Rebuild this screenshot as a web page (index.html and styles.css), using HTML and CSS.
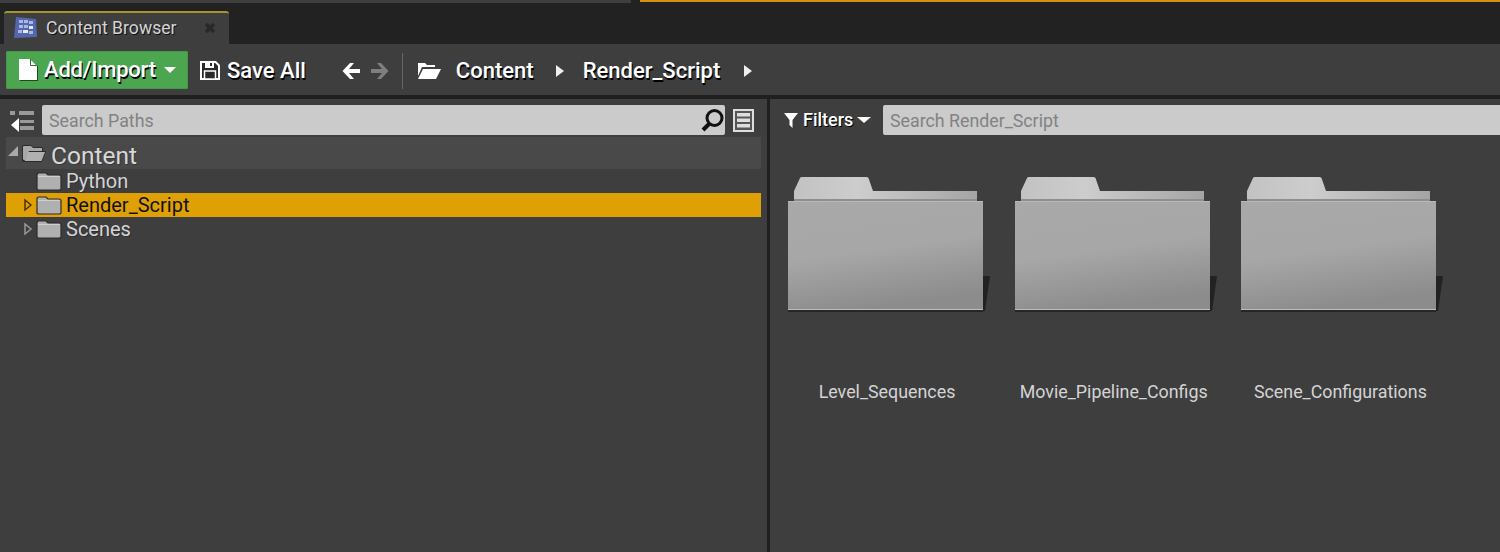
FILE: index.html
```html
<!DOCTYPE html>
<html lang="en">
<head>
  <meta charset="UTF-8">
  <title>Content Browser</title>
  <link rel="stylesheet" href="styles.css">
</head>
<body>
  <div class="top-strip">
    <div class="strip-left"></div>
    <div class="strip-right"></div>
  </div>

  <div class="tab-bar">
    <div class="tab">
      <svg class="tab-icon" width="25" height="23" viewBox="0 0 25 23">
        <path d="M3 1 L23 3 L24 21 L1 22 Z" fill="#5467ad"/>
        <g fill="#a9b6e6">
          <rect x="6" y="4" width="4" height="3"/><rect x="11" y="4" width="4" height="3"/><rect x="16" y="5" width="4" height="3"/>
          <rect x="6" y="9" width="4" height="3"/><rect x="11" y="9" width="4" height="3"/><rect x="16" y="10" width="4" height="3" fill="#e6e9f5"/>
          <rect x="5" y="14" width="4" height="3"/><rect x="10" y="14" width="5" height="3" fill="#e6e9f5"/><rect x="16" y="15" width="4" height="3"/>
        </g>
      </svg>
      <span class="tab-label">Content Browser</span>
      <svg class="tab-close" width="10" height="10" viewBox="0 0 10 10">
        <path d="M1 1 L9 9 M9 1 L1 9" stroke="#282828" stroke-width="3.500"/>
      </svg>
    </div>
  </div>

  <div class="toolbar">
    <button class="add-btn">
      <svg class="doc-icon" width="20" height="23" viewBox="0 0 20 23">
        <path d="M1 1 H12 L19 8 V22 H1 Z" fill="#fff"/>
        <path d="M12.500 1 V7.500 H19" fill="none" stroke="#2e6b30" stroke-width="1"/>
      </svg>
      <span>Add/Import</span>
      <i class="caret"></i>
    </button>
    <div class="tool-item save">
      <svg width="20" height="19" viewBox="0 0 20 19">
        <path d="M1 1 H15.500 L19 4.500 V18 H1 Z" fill="#2a2a2a" stroke="#fff" stroke-width="2"/>
        <rect x="5" y="1" width="9" height="6" fill="#fff"/>
        <rect x="10" y="2" width="2" height="3" fill="#2a2a2a"/>
        <rect x="4.500" y="10" width="11" height="8" fill="#2a2a2a" stroke="#fff" stroke-width="1.500"/>
      </svg>
      <span>Save All</span>
    </div>
    <div class="arrows">
      <svg width="20" height="20" viewBox="0 0 20 20">
        <path d="M9 2 L1.500 10 L9 18 H13 L8 12 H19 V8 H8 L13 2 Z" fill="#fff"/>
      </svg>
      <svg width="20" height="20" viewBox="0 0 20 20">
        <path d="M11 2 L18.500 10 L11 18 H7 L12 12 H1 V8 H12 L7 2 Z" fill="#7f7f7f"/>
      </svg>
    </div>
    <div class="sep"></div>
    <svg class="crumb-folder" width="24" height="18" viewBox="0 0 24 18">
      <path d="M1 1 H8 L10 3 H18 V5 H5 L1 14 Z" fill="#fff"/>
      <path d="M6 7 H24 L19 17 H1 Z" fill="#fff"/>
    </svg>
    <span class="crumb first">Content</span>
    <i class="crumb-arrow"></i>
    <span class="crumb">Render_Script</span>
    <i class="crumb-arrow last"></i>
  </div>
  <div class="toolbar-line"></div>

  <div class="main">
    <div class="paths">
      <div class="paths-search">
        <svg class="collapse-icon" width="26" height="24" viewBox="0 0 26 24">
          <g fill="#9a9a9a">
            <rect x="1" y="1" width="5" height="4"/><rect x="10" y="1" width="15" height="4"/>
            <rect x="11" y="10" width="14" height="3"/><rect x="11" y="16" width="14" height="4"/>
          </g>
          <path d="M10 8 V22 L2 15 Z" fill="#fff"/>
        </svg>
        <div class="search-box">
          <span>Search Paths</span>
          <svg class="glass" width="25" height="25" viewBox="0 0 25 25">
            <circle cx="14.500" cy="10" r="7.500" fill="none" stroke="#111" stroke-width="3"/>
            <path d="M9 16 L3 22" stroke="#111" stroke-width="4"/>
          </svg>
        </div>
        <svg class="view-icon" width="21" height="23" viewBox="0 0 21 23">
          <rect x="1" y="1" width="19" height="21" fill="#555" stroke="#ddd" stroke-width="2"/>
          <rect x="4" y="4" width="13" height="3.500" fill="#ddd"/>
          <rect x="4" y="9.500" width="13" height="3.500" fill="#ddd"/>
          <rect x="4" y="15" width="13" height="3.500" fill="#ddd"/>
        </svg>
      </div>

      <div class="tree">
        <div class="tree-root">
          <i class="open-arrow"></i>
          <svg width="26" height="20" viewBox="0 0 26 20">
            <path d="M1 4 Q1 2 3 2 H10 L12 4 H21 Q22 4 22 6 V8 H25 L21 19 H3 Q1 19 1 17 Z" fill="#2a2a2a"/>
            <path d="M2 4 Q2 3 3 3 H10 L12 5 H21 V8 H8 L4 17 H3 Q2 17 2 16 Z" fill="#a8a8a8"/>
            <path d="M7 9 H24 L20.500 18 H3.500 Z" fill="#b0b0b0"/>
          </svg>
          <span>Content</span>
        </div>
        <div class="tree-row">
          <span class="tree-arrow none"></span>
          <svg class="small-folder" width="26" height="20" viewBox="0 0 26 20">
            <path d="M1 4 Q1 2 3 2 H10 L12 4 H23 Q25 4 25 6 V18 Q25 19 23 19 H3 Q1 19 1 18 Z" fill="#b0b0b0" stroke="#2c2c2c" stroke-width="1.200"/>
            <rect x="2" y="5" width="22" height="1" fill="#cfcfcf"/>
          </svg>
          <span>Python</span>
        </div>
        <div class="tree-row selected">
          <svg class="tree-arrow" width="10" height="14" viewBox="0 0 10 14">
            <path d="M2 2 L8 7 L2 12 Z" fill="none" stroke="#4a3500" stroke-width="1.500"/>
          </svg>
          <svg class="small-folder" width="26" height="20" viewBox="0 0 26 20">
            <path d="M1 4 Q1 2 3 2 H10 L12 4 H23 Q25 4 25 6 V18 Q25 19 23 19 H3 Q1 19 1 18 Z" fill="#b0b0b0" stroke="#2c2c2c" stroke-width="1.200"/>
            <rect x="2" y="5" width="22" height="1" fill="#cfcfcf"/>
          </svg>
          <span>Render_Script</span>
        </div>
        <div class="tree-row">
          <svg class="tree-arrow" width="10" height="14" viewBox="0 0 10 14">
            <path d="M2 2 L8 7 L2 12 Z" fill="none" stroke="#999" stroke-width="1.500"/>
          </svg>
          <svg class="small-folder" width="26" height="20" viewBox="0 0 26 20">
            <path d="M1 4 Q1 2 3 2 H10 L12 4 H23 Q25 4 25 6 V18 Q25 19 23 19 H3 Q1 19 1 18 Z" fill="#b0b0b0" stroke="#2c2c2c" stroke-width="1.200"/>
            <rect x="2" y="5" width="22" height="1" fill="#cfcfcf"/>
          </svg>
          <span>Scenes</span>
        </div>
      </div>
    </div>

    <div class="splitter"></div>

    <div class="assets">
      <div class="assets-search">
        <div class="filters">
          <svg width="14" height="15" viewBox="0 0 14 15">
            <path d="M0 0 H14 L8.500 7 V15 L5.500 12 V7 Z" fill="#fff"/>
          </svg>
          <span>Filters</span>
          <i class="caret small"></i>
        </div>
        <div class="search-box wide"><span>Search Render_Script</span></div>
      </div>

      <div class="grid">
        <div class="asset">
          <svg width="204" height="146" viewBox="0 0 204 146">
            <defs>
              <linearGradient id="front" x1="0.100" y1="0" x2="0.350" y2="1">
                <stop offset="0" stop-color="#a9a9a9"/>
                <stop offset="0.500" stop-color="#a7a7a7"/>
                <stop offset="1" stop-color="#8c8c8c"/>
              </linearGradient>
              <linearGradient id="back" x1="0" y1="0" x2="1" y2="0">
                <stop offset="0" stop-color="#c2c2c2"/>
                <stop offset="0.350" stop-color="#cdcdcd"/>
                <stop offset="1" stop-color="#a4a4a4"/>
              </linearGradient>
              <g id="folder">
                <path d="M196 110 H203 L198 145 H196 Z" fill="#222"/>
                <path d="M7 25 L13 12 Q13.500 11 15 11 H79 Q81 11 81.500 12 L86 25 H190 V36 H7 Z" fill="url(#back)"/>
                <rect x="7" y="33" width="183" height="2" fill="#8e8e8e"/>
                <rect x="1" y="35" width="195" height="111" fill="#262626"/>
                <rect x="1" y="35" width="195" height="109" fill="url(#front)"/>
                <rect x="1" y="35" width="195" height="1" fill="#b8b8b8"/>
                <rect x="1" y="143" width="195" height="1" fill="#bdbdbd"/>
              </g>
            </defs>
            <use href="#folder"/>
          </svg>
          <span class="asset-name">Level_Sequences</span>
        </div>
        <div class="asset">
          <svg width="204" height="146" viewBox="0 0 204 146"><use href="#folder"/></svg>
          <span class="asset-name">Movie_Pipeline_Configs</span>
        </div>
        <div class="asset">
          <svg width="204" height="146" viewBox="0 0 204 146"><use href="#folder"/></svg>
          <span class="asset-name">Scene_Configurations</span>
        </div>
      </div>
    </div>
  </div>
</body>
</html>
```

FILE: styles.css
```css
html, body {
  margin: 0;
  height: 552px;
  overflow: hidden;
}
body {
  font-family: Roboto, 'Liberation Sans', sans-serif;
  background: #3e3e3e;
  color: #d4d4d4;
  display: flex;
  flex-direction: column;
}
svg {
  display: block;
  flex: none;
}

/* top strip */
.top-strip {
  height: 3px;
  background: #222;
  display: flex;
}
.strip-left {
  width: 631px;
  background: #3e3e3e;
}
.strip-right {
  width: 860px;
  height: 2px;
  margin-left: 9px;
  background: #d8920f;
}

/* tab */
.tab-bar {
  height: 41px;
  background: #222;
  display: flex;
  align-items: flex-end;
  padding-left: 4px;
}
.tab {
  width: 225px;
  height: 33px;
  box-sizing: border-box;
  background: #3e3e3e;
  border-top: 2px solid #a3962c;
  border-radius: 3px 3px 0 0;
  display: flex;
  align-items: center;
  padding: 0 0 2px 9px;
}
.tab-label {
  font-size: 17.6px;
  margin-left: 8px;
  width: 159px;
  white-space: nowrap;
  text-shadow: 1px 1px 0 #111;
}

/* toolbar */
.toolbar {
  height: 51px;
  box-sizing: border-box;
  padding: 2px 0 0 6px;
  display: flex;
  align-items: center;
  color: #fff;
  font-size: 22px;
  font-weight: 500;
  text-shadow: 1px 2px 0 #000;
}
.toolbar-line {
  height: 4px;
  background: #1f1f1f;
}
.add-btn {
  width: 182px;
  height: 38px;
  padding: 0 0 0 12px;
  border: none;
  border-radius: 2px;
  background: #4ca64f;
  box-shadow: inset 0 0 0 1px #45994a;
  color: #fff;
  font: inherit;
  text-shadow: inherit;
  display: flex;
  align-items: center;
  gap: 6px;
  margin-top: -2px;
}
.doc-icon {
  filter: drop-shadow(1px 1px 0 #1c4a1e);
}
.add-btn span {
  letter-spacing: -0.2px;
}
.add-btn i {
  margin-left: 2px;
}
.caret {
  width: 0;
  height: 0;
  border-left: 6px solid transparent;
  border-right: 6px solid transparent;
  border-top: 6px solid #fff;
}
.caret.small {
  border-left-width: 7px;
  border-right-width: 7px;
  border-top-width: 6px;
}
.tool-item {
  display: flex;
  align-items: center;
  gap: 7px;
}
.save {
  margin-left: 12px;
}
.arrows {
  display: flex;
  gap: 9px;
  margin-left: 35px;
}
.sep {
  width: 1px;
  height: 36px;
  background: #666;
  margin-left: 12px;
}
.crumb-folder {
  margin-left: 14px;
}
.crumb.first {
  margin-left: 15px;
}
.crumb-arrow {
  width: 0;
  height: 0;
  margin: 0 19px 0 22px;
  border-top: 6px solid transparent;
  border-bottom: 6px solid transparent;
  border-left: 8px solid #eee;
}
.crumb-arrow.last {
  margin-left: 24px;
}

/* main area */
.main {
  flex: 1;
  display: flex;
}
.paths {
  width: 767px;
  box-sizing: border-box;
  padding: 6px 6px 0;
}
.splitter {
  width: 3px;
  background: #1f1f1f;
}
.assets {
  flex: 1;
  padding-top: 6px;
  min-width: 0;
}
.paths-search {
  display: flex;
  align-items: center;
  height: 30px;
}
.collapse-icon {
  margin: 3px 0 0 3px;
}
.search-box {
  background: #cbcbcb;
  height: 30px;
  border-radius: 2px;
  box-sizing: border-box;
  padding-left: 7px;
  display: flex;
  align-items: center;
  justify-content: space-between;
  color: #828282;
  font-size: 17.8px;
  flex: 1;
  margin-left: 7px;
}
.view-icon {
  margin: 0 7px 0 8px;
}

/* tree */
.tree {
  margin-top: 2px;
  font-size: 20px;
  text-shadow: 1px 1px 0 rgba(0, 0, 0, 0.25);
}
.tree-root {
  height: 32px;
  background: #494949;
  display: flex;
  align-items: center;
  font-size: 24.5px;
  color: #d8d8d8;
  width: 755px;
}
.open-arrow {
  width: 0;
  height: 0;
  margin-top: -5px;
  border-bottom: 10px solid #aaa;
  border-left: 10px solid transparent;
  margin-left: 2px;
  margin-right: 3px;
}
.tree-root span {
  margin: 4px 0 0 4px;
}
.tree-row {
  height: 24px;
  width: 755px;
  display: flex;
  align-items: center;
  padding-left: 17px;
  box-sizing: border-box;
}
.tree-row.selected {
  background: #dfa006;
  color: #111;
  text-shadow: none;
}
.tree-arrow {
  width: 10px;
  flex: none;
}
.small-folder {
  margin-left: 3px;
  margin-right: 4px;
}

/* assets */
.assets-search {
  height: 30px;
  display: flex;
  align-items: center;
}
.filters {
  display: flex;
  align-items: center;
  margin-left: 14px;
  color: #fff;
  font-size: 18px;
  font-weight: 500;
  text-shadow: 1px 1px 0 #000;
  width: 99px;
  flex: none;
  gap: 4px;
}
.filters span {
  margin: -2px 0 0 1px;
}
.search-box.wide {
  margin-left: 0;
  border-radius: 2px 0 0 2px;
}
.grid {
  display: flex;
  margin-top: 31px;
  padding-left: 17px;
  gap: 22.7px;
}
.asset {
  width: 204px;
  display: flex;
  flex-direction: column;
  align-items: center;
}
.asset svg {
  align-self: flex-start;
}
.asset-name {
  margin-top: 69px;
  padding-right: 4px;
  font-size: 17.85px;
  white-space: nowrap;
}
```
